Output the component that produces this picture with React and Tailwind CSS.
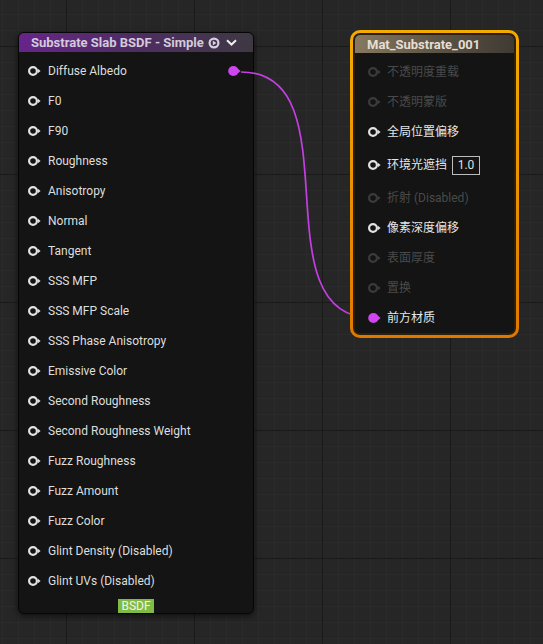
import React from 'react'

const FONT = "font-['Roboto','Noto_Sans_CJK_SC',sans-serif]"

function Pin({ filled, disabled }) {
  const c = filled ? '#cf45f0' : disabled ? '#3b3b3b' : '#e2e2e2'
  return (
    <svg width="13" height="12" viewBox="0 0 13 12" className="shrink-0">
      {filled ? (
        <ellipse cx="5.4" cy="6" rx="5.2" ry="4.9" fill={c} />
      ) : (
        <circle cx="5" cy="6" r="3.9" fill="none" stroke={c} strokeWidth="2.2" />
      )}
      <path d="M9.9 3.8 L12.6 6 L9.9 8.2 Z" fill={c} />
    </svg>
  )
}

const leftInputs = [
  'F0',
  'F90',
  'Roughness',
  'Anisotropy',
  'Normal',
  'Tangent',
  'SSS MFP',
  'SSS MFP Scale',
  'SSS Phase Anisotropy',
  'Emissive Color',
  'Second Roughness',
  'Second Roughness Weight',
  'Fuzz Roughness',
  'Fuzz Amount',
  'Fuzz Color',
  'Glint Density (Disabled)',
  'Glint UVs (Disabled)',
]

const rightInputs = [
  { label: '不透明度重载', disabled: true },
  { label: '不透明蒙版', disabled: true },
  { label: '全局位置偏移' },
  { label: '环境光遮挡', value: '1.0' },
  { label: '折射 (Disabled)', disabled: true },
  { label: '像素深度偏移' },
  { label: '表面厚度', disabled: true },
  { label: '置换', disabled: true },
  { label: '前方材质', filled: true },
]

function SlabNode() {
  return (
    <div className="absolute left-[18px] top-[32px] w-[236px] h-[582px] rounded-[6px] border border-[#060606] bg-[#131413] shadow-[0_2px_6px_rgba(0,0,0,0.6)] flex flex-col">
      {/* header */}
      <div className="h-[20px] rounded-t-[5px] bg-gradient-to-r from-[#672489] via-[#4e2c62] to-[#3e3843] flex items-center pl-[12px] pr-[16px]">
        <span className="text-[13px] font-bold text-[#d3cadb] leading-none">Substrate Slab BSDF - Simple</span>
        <svg width="12" height="12" viewBox="0 0 12 12" className="ml-[4px]">
          <circle cx="6" cy="6" r="4.4" fill="none" stroke="#d8d0e0" strokeWidth="2.2" />
          <path d="M4.8 3.6 L8.4 6 L4.8 8.4 Z" fill="#d8d0e0" />
        </svg>
        <svg width="11" height="7" viewBox="0 0 11 7" className="ml-auto">
          <path d="M1 1.2 L5.5 5.5 L10 1.2" fill="none" stroke="#eeeeee" strokeWidth="2" />
        </svg>
      </div>

      <div className="pt-[4px] flex flex-col">
        <div className="h-[30px] flex items-center pl-[9px] pr-[12px]">
          <Pin />
          <span className="ml-[7px] text-[12px] text-[#dedede]">Diffuse Albedo</span>
          <span className="ml-auto">
            <Pin filled />
          </span>
        </div>
        {leftInputs.map((name) => (
          <div key={name} className="h-[30px] flex items-center pl-[9px]">
            <Pin />
            <span className="ml-[7px] text-[12px] text-[#dedede]">{name}</span>
          </div>
        ))}
      </div>

      <div className="mt-[3px] flex justify-center">
        <span className="h-[14px] px-[3px] bg-[#80bb45] text-[12px] leading-[14px] text-[#f2f7ea]">BSDF</span>
      </div>
    </div>
  )
}

function MaterialNode() {
  return (
    <div className="absolute left-[350px] top-[30px] w-[169px] h-[308px] rounded-[10px] bg-gradient-to-b from-[#f4ab00] to-[#e07800] p-[3px]">
      <div className="h-full rounded-[7px] bg-[#2c200d] p-[2px]">
        <div className="h-full rounded-[5px] bg-[#131413] flex flex-col">
          <div className="h-[18px] rounded-t-[5px] bg-gradient-to-r from-[#87795f] via-[#5d5445] to-[#3f3a33] flex items-center pl-[12px]">
            <span className="text-[13px] font-bold text-[#e4ded4] leading-none">Mat_Substrate_001</span>
          </div>
          <div className="pt-[4px] flex flex-col">
            {rightInputs.map((r) => (
              <div
                key={r.label}
                className={`${r.value ? 'h-[36px]' : 'h-[30px]'} flex items-center pl-[13px]`}
              >
                <Pin disabled={r.disabled} filled={r.filled} />
                <span
                  className={`ml-[6px] text-[12px] ${r.disabled ? 'text-[#4a4a4a]' : 'text-[#e6e6e6]'}`}
                >
                  {r.label}
                </span>
                {r.value && (
                  <span className="ml-[5px] w-[28px] h-[19px] border border-[#bdbdbd] text-[12px] text-[#e0e0e0] flex items-center justify-center">
                    {r.value}
                  </span>
                )}
              </div>
            ))}
          </div>
        </div>
      </div>
    </div>
  )
}

export default function App() {
  return (
    <div
      className={`${FONT} relative w-[543px] h-[644px] overflow-hidden bg-[#262626] bg-[linear-gradient(to_right,#1a1a1a_1px,transparent_1px),linear-gradient(to_bottom,#1a1a1a_1px,transparent_1px),linear-gradient(to_right,#2b2b2b_1px,transparent_1px),linear-gradient(to_bottom,#2b2b2b_1px,transparent_1px)] bg-[size:128px_128px,128px_128px,16px_16px,16px_16px] bg-[position:66px_46px,66px_46px,2px_14px,2px_14px]`}
    >
      <SlabNode />
      {/* wire */}
      <svg width="543" height="644" className="absolute left-0 top-0">
        <path
          d="M241 72 C356 72, 257 318, 372 318"
          fill="none"
          stroke="#c43fe2"
          strokeWidth="1.7"
        />
      </svg>
      <MaterialNode />
    </div>
  )
}
